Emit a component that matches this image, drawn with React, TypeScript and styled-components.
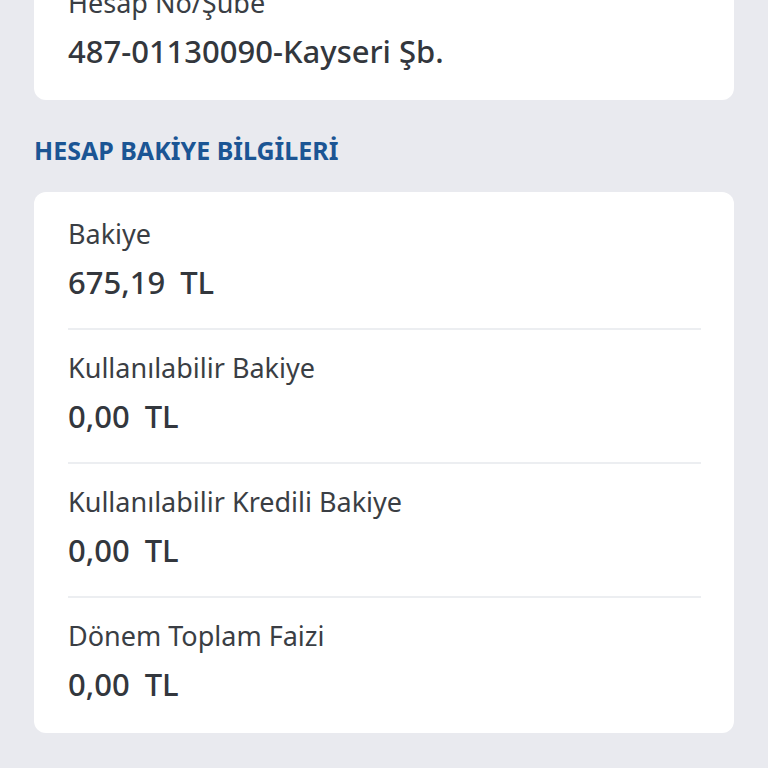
import styled, { createGlobalStyle } from "styled-components";

const GlobalStyle = createGlobalStyle`
    html, body {
        margin: 0;
        padding: 0;
        background-color: #e9eaef;
        font-family: "Noto Sans", "Open Sans", sans-serif;
        color: #33373d;
    }
`

interface Balance {
    label: string,
    amount: string
}

const balances: Balance[] = [
    { label: "Bakiye", amount: "675,19" },
    { label: "Kullanılabilir Bakiye", amount: "0,00" },
    { label: "Kullanılabilir Kredili Bakiye", amount: "0,00" },
    { label: "Dönem Toplam Faizi", amount: "0,00" },
];

// page is shown scrolled down a bit, so the first card is cut at the top
const App: React.FC = () => {
    return (
        <>
            <GlobalStyle />
            <Page>
                <Card>
                    <Row>
                        <Label>Hesap No/Şube</Label>
                        <Value>487-01130090-Kayseri Şb.</Value>
                    </Row>
                </Card>
                <SectionTitle>HESAP BAKİYE BİLGİLERİ</SectionTitle>
                <Card>
                    {balances.map((b, i) => (
                        <Row key={b.label} divided={i < balances.length - 1}>
                            <Label>{b.label}</Label>
                            <Value>
                                {b.amount}
                                <Currency>TL</Currency>
                            </Value>
                        </Row>
                    ))}
                </Card>
            </Page>
        </>
    )
}

const Page = styled.div`
    display: flex;
    flex-direction: column;
    padding: 0 34px 40px;
    margin-top: -39px;
`

const Card = styled.div`
    display: flex;
    flex-direction: column;
    padding: 4px 33px 3px 34px;
    border-radius: 12px;
    background-color: #ffffff;
`

const Row = styled.div<{ divided?: boolean }>`
    display: flex;
    flex-direction: column;
    gap: 14px;
    padding: 22px 0 28px;
    border-bottom: ${props => props.divided ? "2px solid #eceef1" : "none"};
`

const Label = styled.span`
    font-size: 27px;
    line-height: 32px;
    font-weight: 400;
    color: #3a3e44;
    white-space: nowrap;
`

const Value = styled.span`
    font-size: 31px;
    line-height: 36px;
    font-weight: 500;
    color: #33373d;
    white-space: nowrap;
`

const Currency = styled.span`
    margin-left: 15px;
`

const SectionTitle = styled.h2`
    margin: 34px 0 26px;
    font-size: 25px;
    line-height: 32px;
    font-weight: 700;
    color: #1b5594;
`

export default App;
